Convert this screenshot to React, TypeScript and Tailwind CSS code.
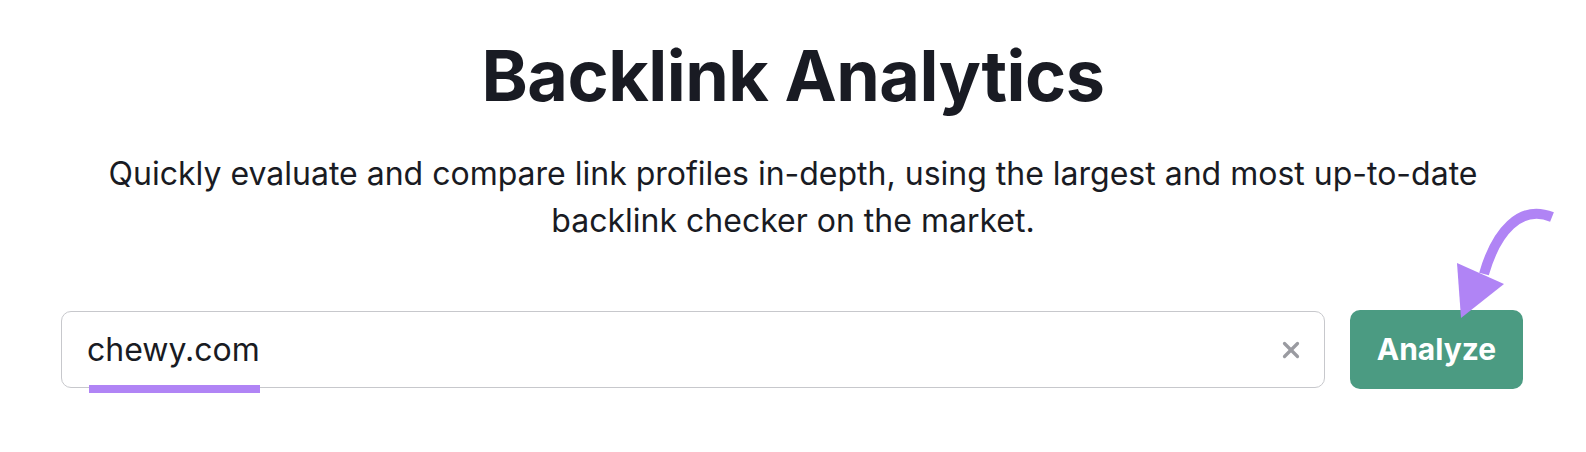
import { X } from 'lucide-react';

function CurvedArrow() {
  return (
    <svg
      className="pointer-events-none absolute left-[1440px] top-[200px]"
      width="130"
      height="130"
      viewBox="1440 200 130 130"
      fill="none"
    >
      <path
        d="M1552 217 C1520 204 1496 232 1484 274"
        stroke="#b084f5"
        strokeWidth="10"
        strokeLinecap="butt"
      />
      <polygon points="1457,263 1504,284 1461,318" fill="#b084f5" />
    </svg>
  );
}

export default function App() {
  return (
    <div className="relative min-h-[452px] w-full bg-white font-['Inter','Liberation_Sans',sans-serif] text-[#191b23]">
      <div className="flex flex-col items-center pt-[41px]">
        <h1 className="text-[70px] font-bold leading-none tracking-[-0.5px]">Backlink Analytics</h1>
        <p className="mt-[39px] text-center text-[32px] leading-[47px]">
          Quickly evaluate and compare link profiles in-depth, using the largest and most up-to-date
          <br />
          backlink checker on the market.
        </p>
      </div>

      <div className="mt-[66px] flex items-center gap-[25px] pl-[61px] pr-[63px]">
        <div className="relative flex h-[77px] flex-1 items-center rounded-[10px] border-[1.5px] border-[#c7c8cc] bg-white pl-[25px] pr-[20px]">
          <span className="relative text-[32px]">
            chewy.com
            <span className="absolute -bottom-[19px] left-[2px] right-0 h-[8px] bg-[#b084f5]" />
          </span>
          <X className="ml-auto h-[26px] w-[26px] text-[#9a9ba1]" strokeWidth={3} />
        </div>
        <button className="h-[79px] w-[173px] rounded-[10px] bg-[#4b9b82] text-[30px] font-bold text-white">
          Analyze
        </button>
      </div>

      <CurvedArrow />
    </div>
  );
}
